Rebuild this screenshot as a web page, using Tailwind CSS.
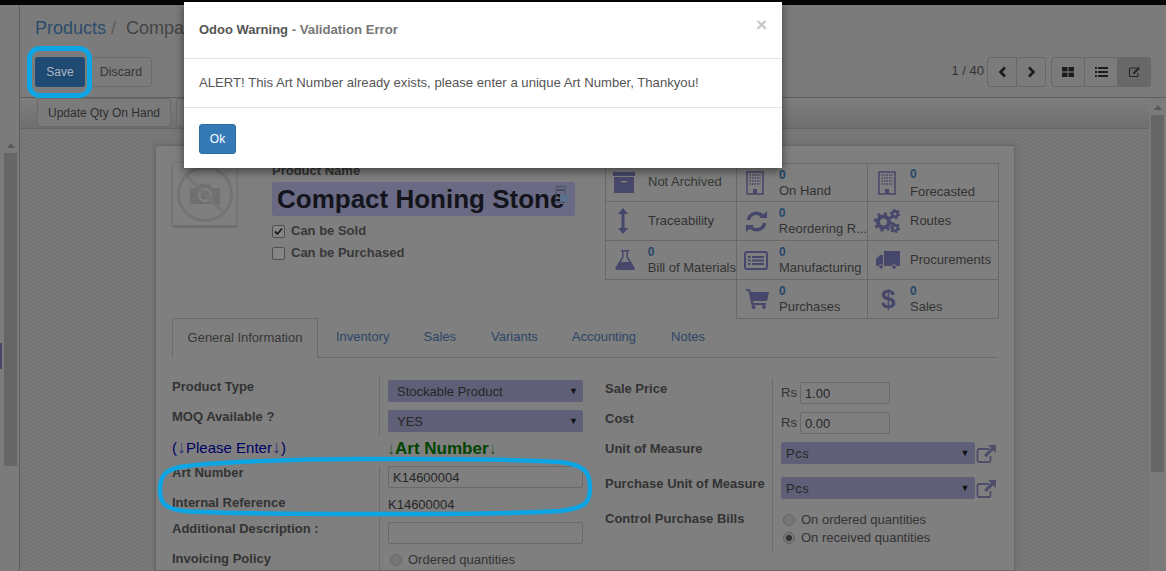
<!DOCTYPE html>
<html lang="en">
<head>
  <meta charset="UTF-8">
  <title>Products / Compact Honing Stone - Odoo</title>
  <script src="https://cdn.jsdelivr.net/npm/@tailwindcss/browser@4"></script>
</head>
<body class="w-[1166px] h-[571px] overflow-hidden relative bg-[#7b7b7b] text-[#2b2b2b] text-[13px] font-['Liberation_Sans',Arial,sans-serif]">

<!-- TOP BAR -->
<div class="h-[5px] bg-[#060606]"></div>

<div class="flex h-[566px]">
  <!-- LEFT SIDEBAR -->
  <aside class="w-[20px] shrink-0 border-r border-[#5f5f5f] bg-[#7b7b7b] flex flex-col items-center pl-[2px] pt-[138px]">
    <div class="w-0 h-0 border-x-[4px] border-x-transparent border-b-[5px] border-b-[#5a5a5a]"></div>
    <div class="w-[13px] h-[313px] mt-[5px] bg-[#666666]"></div>
  </aside>

  <!-- MAIN -->
  <main class="flex-1 min-w-0 flex flex-col">
    <!-- CONTROL PANEL -->
    <div class="h-[93px] shrink-0 border-b border-[#5f5f5f] px-[15px] pt-[12px]">
      <div class="text-[18px] leading-[22px]"><span class="text-[#2b4c6b]">Products</span><span class="text-[#5c5c5c]"> / </span><span class="text-[#444444] ml-[5px]">Compa</span></div>
      <div class="flex items-center mt-[18px]">
        <button class="w-[50px] h-[30px] rounded-[3px] bg-[#1f4a73] text-[#a9b5c0] text-[12px]">Save</button>
        <button class="w-[62px] h-[30px] ml-[5px] rounded-[3px] border border-[#6b6b6b] text-[#363636] text-[12.5px]">Discard</button>
        <span class="ml-auto mr-[3px] text-[#333333] text-[13px] -mt-[2px]">1 / 40</span>
        <div class="flex h-[30px] border border-[#686868] rounded-[3px]">
          <span class="w-[29px] flex items-center justify-center border-r border-[#686868]"><svg width="9" height="12" viewBox="0 0 9 12"><path d="M7 1.500 2.500 6 7 10.500" fill="none" stroke="#1c1c1c" stroke-width="2.600"/></svg></span>
          <span class="w-[28px] flex items-center justify-center"><svg width="9" height="12" viewBox="0 0 9 12"><path d="M2 1.500 6.500 6 2 10.500" fill="none" stroke="#1c1c1c" stroke-width="2.600"/></svg></span>
        </div>
        <div class="flex h-[30px] ml-[5px] border border-[#686868] rounded-[3px]">
          <span class="w-[33px] flex items-center justify-center border-r border-[#686868]"><svg width="12" height="10" viewBox="0 0 12 10" fill="#1c1c1c"><rect width="5.500" height="4.400"/><rect x="6.500" width="5.500" height="4.400"/><rect y="5.600" width="5.500" height="4.400"/><rect x="6.500" y="5.600" width="5.500" height="4.400"/></svg></span>
          <span class="w-[33px] flex items-center justify-center border-r border-[#686868]"><svg width="13" height="10" viewBox="0 0 13 10" fill="#1c1c1c"><rect width="2" height="2"/><rect x="3" width="10" height="2"/><rect y="4" width="2" height="2"/><rect x="3" y="4" width="10" height="2"/><rect y="8" width="2" height="2"/><rect x="3" y="8" width="10" height="2"/></svg></span>
          <span class="w-[32px] flex items-center justify-center bg-[#686868]"><svg width="13" height="12" viewBox="0 0 13 12"><path d="M9 2H2.500A1 1 0 0 0 1.500 3v6.500a1 1 0 0 0 1 1H9a1 1 0 0 0 1-1V7" fill="none" stroke="#262626" stroke-width="1.100"/><path d="M5 6.500 10.500 1l1.500 1.500L6.500 8H5z" fill="#262626"/></svg></span>
        </div>
      </div>
    </div>

    <!-- STATUS BAR -->
    <div class="h-[31px] w-[1129px] shrink-0 border-b border-[#666666] bg-gradient-to-b from-[#7e7e7e] to-[#6f6f6f] pl-[17px] flex gap-[5px]">
      <button class="w-[134px] h-[29px] rounded-[3px] border border-[#6a6a6a] bg-[#7b7b7b] text-[#303030] text-[12px]">Update Qty On Hand</button>
      <button class="w-[60px] h-[29px] rounded-[3px] border border-[#6a6a6a] bg-[#7b7b7b]"></button>
    </div>

    <!-- SHEET AREA -->
    <div class="flex-1 min-h-0 flex overflow-hidden">
      <div class="w-[1129px] shrink-0 pl-[135px] pt-[16px] bg-[repeating-conic-gradient(#737373_0_25%,#7a7a7a_0_50%)] bg-[length:4px_4px]">
        <div class="w-[860px] h-[426px] overflow-hidden border border-[#686868] bg-[#7f7f7f] shadow-[0_0_5px_#666666] pl-[16px] pr-[15px] pt-[16px]">

          <!-- HEAD: image, name, stat buttons -->
          <div class="flex h-[156px]">
            <div class="w-[65px] h-[64px] rounded-[2px] border border-[#757575] shadow-[0_1px_2px_#5f5f5f] flex items-center justify-center shrink-0">
              <svg width="58" height="58" viewBox="0 0 58 58"><circle cx="29" cy="29" r="26.500" fill="none" stroke="#737373" stroke-width="3"/><path d="M14 23h8l2-4h10l2 4h8v16H14z" fill="#707070"/><circle cx="29" cy="30" r="7" fill="#7f7f7f"/><circle cx="29" cy="30" r="4.500" fill="#707070"/><path d="M11 11 47 47" stroke="#757575" stroke-width="3"/></svg>
            </div>
            <div class="w-[303px] ml-[35px] shrink-0">
              <div class="font-bold text-[#333333] leading-[17px]">Product Name</div>
              <div class="relative h-[34px] mt-[3px] rounded-[3px] bg-[#6a6a84] pl-[5px] text-[26px] leading-[34px] font-bold text-[#14141c] whitespace-nowrap">Compact Honing Stone
                <svg class="absolute left-[283px] top-[4px]" width="16" height="17" viewBox="0 0 16 17"><path d="M1 .5h9v16H1z" fill="none" stroke="#4a5266"/><path d="M2 4h7" stroke="#3d4454" stroke-width="1.500"/><path d="M5 9l3-1 3 1 3-1v7l-3 1-3-1-3 1z" fill="#5c6f8c"/></svg>
              </div>
              <div class="flex items-center mt-[8px] h-[14px]">
                <span class="w-[13px] h-[13px] rounded-[2px] border border-[#4f4f4f] bg-[#858585] flex items-center justify-center"><svg width="9" height="9" viewBox="0 0 9 9"><path d="M1 4.500 3.500 7 8 1.500" fill="none" stroke="#1c1c1c" stroke-width="1.800"/></svg></span>
                <span class="ml-[6px] font-bold text-[#383838]">Can be Sold</span>
              </div>
              <div class="flex items-center mt-[8px] h-[14px]">
                <span class="w-[13px] h-[13px] rounded-[2px] border border-[#4f4f4f] bg-[#858585]"></span>
                <span class="ml-[6px] font-bold text-[#383838]">Can be Purchased</span>
              </div>
            </div>
            <!-- stat buttons -->
            <div class="ml-[30px] mt-[1px] w-[394px] h-[155px] shrink-0 grid grid-cols-[132px_131px_131px] grid-rows-[39px_39px_39px_39px]">
              <div class="border border-[#696969] flex items-center pl-[7px]"><span class="w-[35px]"><svg width="24" height="22" viewBox="0 0 24 22" fill="#47476b"><rect width="22" height="4"/><path d="M1 5h20v16H1zM8 9v1.500h6V9z" fill-rule="evenodd"/></svg></span><span class="text-[#333a33] -mt-[2px]">Not Archived</span></div>
              <div class="border border-l-0 border-[#696969] flex items-center pl-[9px]"><span class="w-[33px]"><svg width="18" height="24" viewBox="0 0 18 24"><path d="M1 1h16v22H1z" fill="none" stroke="#47476b" stroke-width="1.500"/><path d="M3.500 4h11M3.500 7h11M3.500 10h11M3.500 13h11" stroke="#47476b" stroke-width="1.500" stroke-dasharray="1.500 1"/><path d="M7 18h4v5H7z" fill="#47476b"/></svg></span><span class="leading-[15px]"><b class="block text-[#24476b] text-[12px]">0</b><span class="text-[#333333]">On Hand</span></span></div>
              <div class="border border-l-0 border-[#696969] flex items-center pl-[10px]"><span class="w-[32px]"><svg width="18" height="24" viewBox="0 0 18 24"><path d="M1 1h16v22H1z" fill="none" stroke="#47476b" stroke-width="1.500"/><path d="M3.500 4h11M3.500 7h11M3.500 10h11M3.500 13h11" stroke="#47476b" stroke-width="1.500" stroke-dasharray="1.500 1"/><path d="M7 18h4v5H7z" fill="#47476b"/></svg></span><span class="leading-[15px]"><b class="block mb-[2px] text-[#24476b] text-[12px]">0</b><span class="text-[#333333]">Forecasted</span></span></div>

              <div class="border border-t-0 border-[#696969] flex items-center pl-[12px]"><span class="w-[30px]"><svg width="10" height="26" viewBox="0 0 10 26" fill="#47476b"><path d="M5 0l5 6H6.500v14H10l-5 6-5-6h3.500V6H0z"/></svg></span><span class="text-[#333333]">Traceability</span></div>
              <div class="border-r border-b border-[#696969] flex items-center pl-[9px]"><span class="w-[33px]"><svg width="21" height="21" viewBox="0 0 21 21"><path d="M2.500 9A8 8 0 0 1 16 4.500" fill="none" stroke="#47476b" stroke-width="3.500"/><path d="M13 7h8V0z" fill="#47476b"/><path d="M18.500 12A8 8 0 0 1 5 16.500" fill="none" stroke="#47476b" stroke-width="3.500"/><path d="M8 14H0v7z" fill="#47476b"/></svg></span><span class="leading-[15px] whitespace-nowrap"><b class="block text-[#24476b] text-[12px]">0</b><span class="text-[#333333]">Reordering R...</span></span></div>
              <div class="border-r border-b border-[#696969] flex items-center pl-[6px]"><span class="w-[36px]"><svg width="26" height="24" viewBox="0 0 26 24"><circle cx="9.500" cy="13" r="5.500" fill="none" stroke="#47476b" stroke-width="4"/><circle cx="9.500" cy="13" r="8.500" fill="none" stroke="#47476b" stroke-width="2.500" stroke-dasharray="3 3.700"/><circle cx="21" cy="5" r="2.800" fill="none" stroke="#47476b" stroke-width="2.400"/><circle cx="21" cy="5" r="4.500" fill="none" stroke="#47476b" stroke-width="1.600" stroke-dasharray="2 2.700"/><circle cx="21" cy="19" r="2.800" fill="none" stroke="#47476b" stroke-width="2.400"/><circle cx="21" cy="19" r="4.500" fill="none" stroke="#47476b" stroke-width="1.600" stroke-dasharray="2 2.700"/></svg></span><span class="text-[#333333]">Routes</span></div>

              <div class="border border-t-0 border-[#696969] flex items-center pl-[9px]"><span class="w-[33px]"><svg width="20" height="20" viewBox="0 0 20 20" fill="#47476b"><path d="M6 0h8v1.500h-1V7l6.500 10.500A1.600 1.600 0 0 1 18 20H2a1.600 1.600 0 0 1-1.500-2.500L7 7V1.500H6zM8.500 1.500V7.500L6 12h8l-2.500-4.500V1.500z" fill-rule="evenodd"/></svg></span><span class="leading-[15px] whitespace-nowrap"><b class="block text-[#24476b] text-[12px]">0</b><span class="text-[#333333]">Bill of Materials</span></span></div>
              <div class="border-r border-b border-[#696969] flex items-center pl-[7px]"><span class="w-[35px]"><svg width="24" height="19" viewBox="0 0 24 19"><rect x="1" y="1" width="22" height="17" rx="2" fill="none" stroke="#47476b" stroke-width="2"/><path d="M4 5h2.500v2H4zM8 5h12v2H8zM4 8.500h2.500v2H4zM8 8.500h12v2H8zM4 12h2.500v2H4zM8 12h12v2H8z" fill="#47476b"/></svg></span><span class="leading-[15px]"><b class="block text-[#24476b] text-[12px]">0</b><span class="text-[#333333]">Manufacturing</span></span></div>
              <div class="border-r border-b border-[#696969] flex items-center pl-[8px]"><span class="w-[34px]"><svg width="24" height="19" viewBox="0 0 24 19" fill="#47476b"><path d="M8 0h16v15H8zM1 7l3-3h3v11H0V8z"/><circle cx="5" cy="16" r="2.300" stroke="#7f7f7f"/><circle cx="18" cy="16" r="2.300" stroke="#7f7f7f"/></svg></span><span class="text-[#333333]">Procurements</span></div>

              <div></div>
              <div class="border-x border-b border-[#696969] -ml-px flex items-center pl-[9px]"><span class="w-[33px]"><svg width="23" height="20" viewBox="0 0 23 20" fill="#47476b"><path d="M0 0h4l1 3h18l-2 9H7l.5 2H20v2H5.500L2.500 2H0z"/><circle cx="7.500" cy="18" r="2"/><circle cx="18" cy="18" r="2"/></svg></span><span class="leading-[15px]"><b class="block text-[#24476b] text-[12px]">0</b><span class="text-[#333333]">Purchases</span></span></div>
              <div class="border-r border-b border-[#696969] flex items-center pl-[13px]"><span class="w-[29px] text-[#47476b] text-[26px] font-bold leading-none">$</span><span class="leading-[15px]"><b class="block text-[#24476b] text-[12px]">0</b><span class="text-[#333333]">Sales</span></span></div>
            </div>
          </div>

          <!-- TABS -->
          <div class="flex h-[40px] border-b border-[#6c6c6c] w-[826px] text-[#2c4666] text-[13px]">
            <div class="w-[146px] h-[40px] border border-b-0 border-[#6c6c6c] bg-[#7f7f7f] flex items-center justify-center pb-[2px] text-[#373737]">General Information</div>
            <div class="ml-[18px] h-[38px] flex items-center">Inventory</div>
            <div class="ml-[34px] h-[38px] flex items-center">Sales</div>
            <div class="ml-[35px] h-[38px] flex items-center">Variants</div>
            <div class="ml-[34px] h-[38px] flex items-center">Accounting</div>
            <div class="ml-[35px] h-[38px] flex items-center">Notes</div>
          </div>

          <!-- FORM -->
          <div class="flex mt-[18px]">
            <!-- left group -->
            <div class="w-[433px] shrink-0">
              <div class="flex h-[34px]"><div class="w-[208px] border-r border-[#6c6c6c] font-bold text-[#333333] pt-[4px] leading-[13px]">Product Type</div><div class="ml-[8px] mt-[4px] w-[195px] h-[22px] rounded-[2px] bg-[#5f5f78] flex items-center justify-between pl-[9px] pr-[5px] pt-[2px] text-[#262626]">Stockable Product<span class="text-[9px] text-[#111111]">▼</span></div></div>
              <div class="flex h-[26px]"><div class="w-[208px] border-r border-[#6c6c6c] font-bold text-[#333333] leading-[13px]">MOQ Available ?</div><div class="ml-[8px] w-[195px] h-[22px] rounded-[2px] bg-[#5f5f78] flex items-center justify-between pl-[9px] pr-[5px] pt-[2px] text-[#262626]">YES<span class="text-[9px] text-[#111111]">▼</span></div></div>
              <div class="flex h-[30px] items-center pb-[8px]">
                <div class="w-[208px] text-[#000066] text-[15px] whitespace-nowrap">(<span class="text-[18px] text-[#33337a]">↓</span>Please Enter<span class="text-[18px] text-[#33337a]">↓</span>)</div>
                <div class="ml-[7px] mt-[4px] text-[#004400] text-[17px] font-bold whitespace-nowrap"><span class="text-[16px] font-normal text-[#335533]">↓</span>Art Number<span class="text-[16px] font-normal text-[#335533]">↓</span></div>
              </div>
              <div class="flex h-[30px]"><div class="w-[208px] border-r border-[#6c6c6c] font-bold text-[#333333] leading-[13px]">Art Number</div><div class="ml-[8px] w-[195px] h-[22px] rounded-[2px] border border-[#696969] flex items-center pl-[4px] pt-[2px] text-[#262626]">K14600004</div></div>
              <div class="flex h-[26px]"><div class="w-[208px] border-r border-[#6c6c6c] font-bold text-[#333333] leading-[13px]">Internal Reference</div><div class="ml-[8px] pt-[2px] leading-[14px] text-[#262626]">K14600004</div></div>
              <div class="flex h-[30px]"><div class="w-[208px] border-r border-[#6c6c6c] font-bold text-[#333333] leading-[13px]">Additional Description :</div><div class="ml-[8px] w-[195px] h-[22px] rounded-[2px] border border-[#696969]"></div></div>
              <div class="flex h-[18px]"><div class="w-[208px] border-r border-[#6c6c6c] font-bold text-[#333333] leading-[13px]">Invoicing Policy</div><div class="ml-[10px] -mt-[1px] flex items-center h-[18px] text-[#333333]"><span class="w-[12px] h-[12px] rounded-full border border-[#666666] bg-[#767676]"></span><span class="ml-[6px]">Ordered quantities</span></div></div>
            </div>
            <!-- right group -->
            <div class="w-[393px] pt-[2px]">
              <div class="flex h-[34px]"><div class="w-[168px] border-r border-[#6c6c6c] font-bold text-[#333333] pt-[4px] leading-[13px]">Sale Price</div><div class="ml-[8px] flex items-center h-[22px] mt-[4px] text-[#333333]">Rs<span class="ml-[3px] w-[90px] h-[22px] rounded-[2px] border border-[#696969] flex items-center pl-[4px] pt-[2px] text-[#262626]">1.00</span></div></div>
              <div class="flex h-[30px]"><div class="w-[168px] border-r border-[#6c6c6c] text-[#333333] font-bold leading-[13px]">Cost</div><div class="ml-[8px] flex items-center h-[22px] text-[#333333]">Rs<span class="ml-[3px] w-[90px] h-[22px] rounded-[2px] border border-[#696969] flex items-center pl-[4px] pt-[2px] text-[#262626]">0.00</span></div></div>
              <div class="flex h-[35px]"><div class="w-[168px] border-r border-[#6c6c6c] font-bold text-[#333333] leading-[13px]">Unit of Measure</div><div class="ml-[8px] flex h-[22px]"><span class="w-[194px] rounded-[2px] bg-[#5f5f78] flex items-center justify-between pl-[5px] pr-[5px] pt-[2px] text-[#262626] tracking-[0.5px]">Pcs<span class="text-[9px] text-[#111111]">▼</span></span><svg class="ml-[1px] mt-[3px]" width="20" height="18" viewBox="0 0 20 18"><path d="M13 4H3a1.500 1.500 0 0 0-1.500 1.500v10A1.500 1.500 0 0 0 3 17h10a1.500 1.500 0 0 0 1.500-1.500V11" fill="none" stroke="#4e4e6a" stroke-width="1.800"/><path d="M12 0h8v8l-2.800-2.800-7 7-2.200-2.200 7-7z" fill="#4e4e6a"/></svg></div></div>
              <div class="flex h-[35px]"><div class="w-[168px] border-r border-[#6c6c6c] font-bold text-[#333333] leading-[13px] whitespace-nowrap">Purchase Unit of Measure</div><div class="ml-[8px] flex h-[22px]"><span class="w-[194px] rounded-[2px] bg-[#5f5f78] flex items-center justify-between pl-[5px] pr-[5px] pt-[2px] text-[#262626] tracking-[0.5px]">Pcs<span class="text-[9px] text-[#111111]">▼</span></span><svg class="ml-[1px] mt-[3px]" width="20" height="18" viewBox="0 0 20 18"><path d="M13 4H3a1.500 1.500 0 0 0-1.500 1.500v10A1.500 1.500 0 0 0 3 17h10a1.500 1.500 0 0 0 1.500-1.500V11" fill="none" stroke="#4e4e6a" stroke-width="1.800"/><path d="M12 0h8v8l-2.800-2.800-7 7-2.200-2.200 7-7z" fill="#4e4e6a"/></svg></div></div>
              <div class="flex h-[41px]"><div class="w-[168px] border-r border-[#6c6c6c] font-bold text-[#333333] leading-[13px]">Control Purchase Bills</div><div class="ml-[10px] -mt-[1px] text-[#333333]">
                <div class="flex items-center h-[18px]"><span class="w-[12px] h-[12px] rounded-full border border-[#666666] bg-[#767676]"></span><span class="ml-[6px]">On ordered quantities</span></div>
                <div class="flex items-center h-[18px]"><span class="w-[12px] h-[12px] rounded-full border border-[#666666] bg-[#767676] flex items-center justify-center"><span class="w-[6px] h-[6px] rounded-full bg-[#333333]"></span></span><span class="ml-[6px]">On received quantities</span></div>
              </div></div>
            </div>
          </div>
        </div>
      </div>
      <!-- strip under the right scrollbar -->
      <div class="flex-1 bg-[#7b7b7b]"></div>
    </div>
  </main>
</div>

<!-- purple sliver at the left edge -->
<div class="absolute left-0 top-[343px] w-[2px] h-[26px] bg-[#47476b]"></div>

<!-- right scrollbar -->
<div class="absolute left-[1154px] top-[105px] w-0 h-0 border-x-[4px] border-x-transparent border-b-[5px] border-b-[#5a5a5a]"></div>
<div class="absolute left-[1151px] top-[115px] w-[13px] h-[357px] bg-[#666666]"></div>

<!-- MODAL -->
<div class="absolute left-[184px] top-[2px] w-[598px] h-[166px] bg-white shadow-[0_3px_9px_rgba(0,0,0,0.5)] flex flex-col">
  <div class="h-[57px] shrink-0 border-b border-[#e5e5e5] flex items-center justify-between pl-[15px] pr-[15px]">
    <div class="text-[13px] font-bold text-[#555555] -mt-[1px]">Odoo Warning <span class="text-[#777777] text-[13.2px]">- Validation Error</span></div>
    <span class="text-[#c8c8c8] text-[19px] font-bold leading-none -mt-[12px]">×</span>
  </div>
  <div class="h-[49px] shrink-0 border-b border-[#e5e5e5] flex items-center pl-[15px] text-[13.15px] text-[#555555]">ALERT! This Art Number already exists, please enter a unique Art Number, Thankyou!</div>
  <div class="pl-[15px] pt-[16px]">
    <button class="w-[37px] h-[30px] rounded-[3px] bg-[#337ab7] border border-[#2e6da4] text-white text-[12px]">Ok</button>
  </div>
</div>

<!-- BLUE ANNOTATIONS -->
<svg class="absolute left-0 top-0 pointer-events-none" width="1166" height="571" viewBox="0 0 1166 571">
  <rect x="29.500" y="48.500" width="60" height="47" rx="10" fill="none" stroke="#0ea5e4" stroke-width="5"/>
  <path d="M360 459C300 459 210 462 180 467C165 470 160 476 160 490C160 503 165 509 185 511C240 515 500 515 560 511C585 508 590 503 590 488C590 472 585 465 560 462C500 458 420 459 360 459Z" fill="none" stroke="#0ea5e4" stroke-width="4.500"/>
</svg>

</body>
</html>
